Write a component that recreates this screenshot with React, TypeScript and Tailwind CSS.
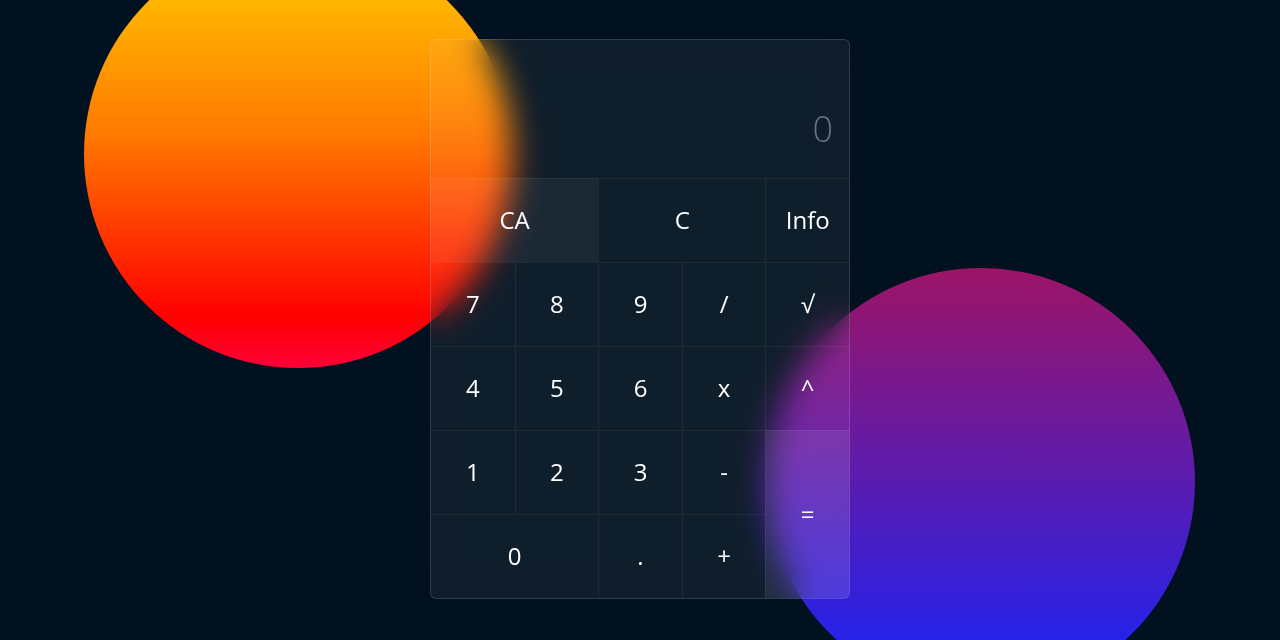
import React from 'react';

type Key = {
  label: string;
  className?: string;
};

const keys: Key[] = [
  { label: 'CA', className: 'col-span-2 border-l-0 bg-white/[0.05]' },
  { label: 'C', className: 'col-span-2' },
  { label: 'Info' },
  { label: '7', className: 'border-l-0' },
  { label: '8' },
  { label: '9' },
  { label: '/' },
  { label: '√' },
  { label: '4', className: 'border-l-0' },
  { label: '5' },
  { label: '6' },
  { label: 'x' },
  { label: '^' },
  { label: '1', className: 'border-l-0' },
  { label: '2' },
  { label: '3' },
  { label: '-' },
  { label: '=', className: 'row-span-2 bg-white/[0.08]' },
  { label: '0', className: 'col-span-2 border-l-0' },
  { label: '.' },
  { label: '+' },
];

function Calculator() {
  return (
    <div className="relative z-10 mb-[3px] w-[420px] overflow-hidden rounded-md border border-white/[0.14] bg-white/[0.055] backdrop-blur-lg">
      <div className="flex h-[138px] items-end justify-end pb-[29px] pr-4">
        <span className="text-4xl font-light text-gray-500">0</span>
      </div>
      <div className="grid grid-cols-5 auto-rows-[84px]">
        {keys.map((k) => (
          <button
            key={k.label}
            className={`flex items-center justify-center border-l border-t border-white/[0.06] text-2xl text-white ${k.className ?? ''}`}
          >
            {k.label}
          </button>
        ))}
      </div>
    </div>
  );
}

export default function App() {
  return (
    <div
      className="relative flex h-[640px] w-full items-center justify-center overflow-hidden bg-[#02111f]"
      style={{ fontFamily: '"Open Sans", "Noto Sans", sans-serif' }}
    >
      <div className="absolute left-[84px] top-[-60px] h-[428px] w-[428px] rounded-full bg-[linear-gradient(180deg,#ffd000_0%,#ff7a00_45%,#ff0000_88%,#ff0038_100%)]" />
      <div className="absolute left-[767px] top-[268px] h-[428px] w-[428px] rounded-full bg-[linear-gradient(180deg,#9d1466_0%,#5a1cb0_50%,#2222ee_90%,#1f24f5_100%)]" />
      <Calculator />
    </div>
  );
}
